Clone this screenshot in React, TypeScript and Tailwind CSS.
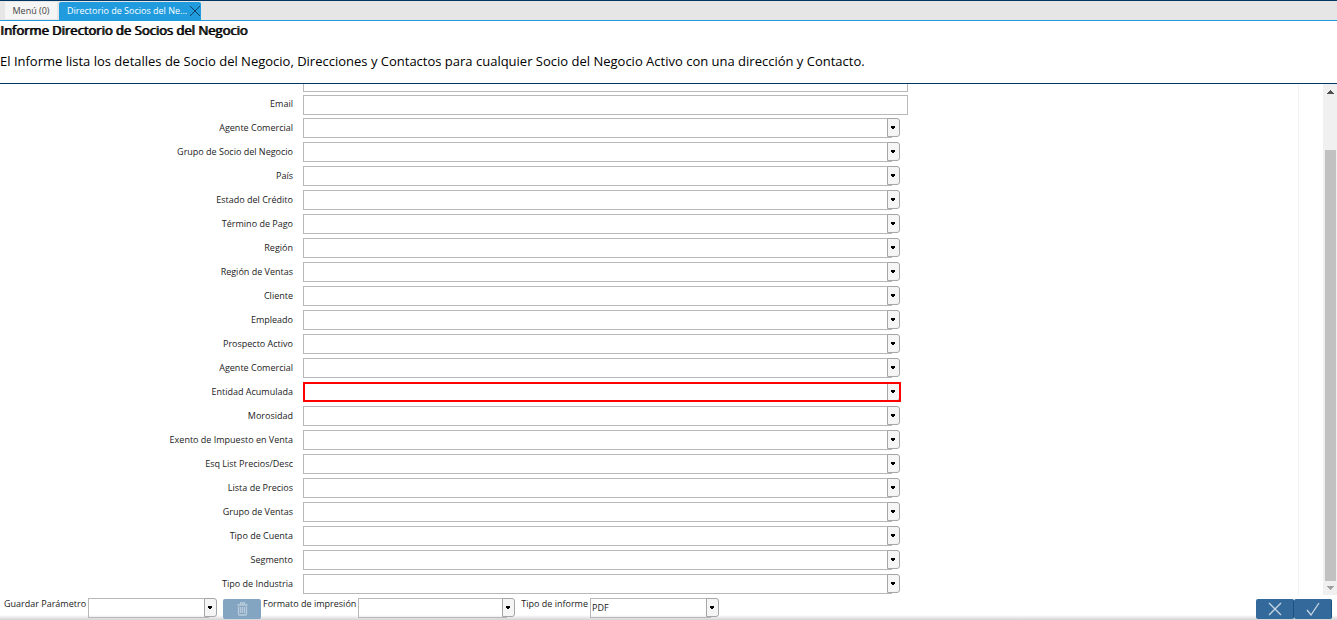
const fields = [
  'Agente Comercial',
  'Grupo de Socio del Negocio',
  'País',
  'Estado del Crédito',
  'Término de Pago',
  'Región',
  'Región de Ventas',
  'Cliente',
  'Empleado',
  'Prospecto Activo',
  'Agente Comercial',
  'Entidad Acumulada',
  'Morosidad',
  'Exento de Impuesto en Venta',
  'Esq List Precios/Desc',
  'Lista de Precios',
  'Grupo de Ventas',
  'Tipo de Cuenta',
  'Segmento',
  'Tipo de Industria',
]

const Combo = ({
  id,
  options = [''],
  required = false,
}: {
  id: string
  options?: string[]
  required?: boolean
}) => (
  <div className="relative h-5">
    <select
      id={id}
      className="block h-5 w-full appearance-none rounded-none bg-transparent pr-4 pl-0.5 text-[9px] text-[#222] outline-none"
    >
      {options.map((option) => (
        <option key={option}>{option}</option>
      ))}
    </select>
    <span className="pointer-events-none absolute inset-y-0 right-2 left-0 border border-r-0 border-[#b8b8b8]" />
    <span className="pointer-events-none absolute top-0 right-0 flex h-[19px] w-[13px] items-center justify-center rounded-r-[3px] border border-[#a6a6a6] bg-[#f5f5f5] pr-px">
      <svg width="4" height="3" viewBox="0 0 4 3" shapeRendering="crispEdges">
        <path d="M0 0h4v2H3v1H1V2H0z" fill="#000" />
      </svg>
    </span>
    {required && (
      <span className="pointer-events-none absolute inset-y-0 -right-px left-0 border-2 border-[#ff0000]" />
    )}
  </div>
)

const TextRow = ({ label, hideLabel = false }: { label: string; hideLabel?: boolean }) => (
  <div className="grid h-[23px] grid-cols-[293fr_605fr_380fr] gap-x-2.5 pt-0.5">
    {hideLabel ? (
      <span />
    ) : (
      <label htmlFor={label} className="text-right leading-[18px]">
        {label}
      </label>
    )}
    <input
      id={label}
      aria-label={hideLabel ? label : undefined}
      type="text"
      className="h-5 w-full border border-[#b8b8b8] bg-white px-1 outline-none"
    />
  </div>
)

const Tabs = () => (
  <nav className="flex h-[21px] shrink-0 items-end border-t border-b border-t-[#003764] border-b-[#1f9bde] bg-[#e6e6e6] pl-[5px]">
    <button className="mb-px h-[17px] w-[52px] bg-[#f5f5f5] text-[9px] text-[#444]">Menú (0)</button>
    <div className="ml-0.5 flex h-[18px] w-[142px] items-center justify-between rounded-t-[2px] bg-[#1f9bde] pl-2">
      <button className="text-[9px] font-medium whitespace-nowrap text-white">
        Directorio de Socios del Ne...
      </button>
      <button aria-label="Cerrar">
        <svg width="12" height="12" viewBox="0 0 12 12" stroke="#123f5e" fill="none">
          <path d="M1 1l10 10M11 1L1 11" />
        </svg>
      </button>
    </div>
  </nav>
)

const Scrollbar = () => (
  <div className="flex w-3.5 shrink-0 flex-col items-center bg-[#f0f0f0]">
    <svg width="7" height="4" viewBox="0 0 7 4" className="mt-1.5" shapeRendering="crispEdges">
      <path d="M3 0h1v1h1v1h1v1h1v1H0V3h1V2h1V1h1z" fill="#505050" />
    </svg>
    <div className="grow-[56]" />
    <div className="w-[11px] grow-[431] bg-[#c1c1c1]" />
    <svg width="7" height="4" viewBox="0 0 7 4" className="mt-[5px] mb-[5px]" shapeRendering="crispEdges">
      <path d="M0 0h7v1H6v1H5v1H4v1H3V3H2V2H1V1H0z" fill="#a0a0a0" />
    </svg>
  </div>
)

const Footer = () => (
  <footer className="flex h-[25px] shrink-0 items-start bg-linear-to-b from-white from-80% to-[#d4d4d4] text-[9px]">
    <label htmlFor="guardar" className="ml-1 leading-[18px]">
      Guardar Parámetro
    </label>
    <div className="mt-[3px] ml-0.5 w-[129px]">
      <Combo id="guardar" />
    </div>
    <button
      aria-label="Eliminar"
      className="mt-1 ml-1.5 flex h-5 w-[38px] items-center justify-center rounded-[2px] bg-[#84a5c1]"
    >
      <svg width="11" height="14" viewBox="0 0 11 14" stroke="#b9cbdb" strokeWidth="1.3" fill="none">
        <path d="M0.5 3h10M3.500 2.500V1h4v1.500M1.500 4.500v7.500q0 1 1 1h6q1 0 1-1V4.500M3.500 5v6M5.500 5v6M7.500 5v6" />
      </svg>
    </button>
    <label htmlFor="formato" className="ml-0.5 leading-[18px]">
      Formato de impresión
    </label>
    <div className="mt-[3px] ml-0.5 w-[157px]">
      <Combo id="formato" />
    </div>
    <label htmlFor="tipo" className="ml-1.5 leading-[18px]">
      Tipo de informe
    </label>
    <div className="mt-[3px] ml-0.5 w-[129px]">
      <Combo id="tipo" options={['PDF', 'HTML', 'XLS']} />
    </div>
    <div className="mt-1 mr-[5px] ml-auto flex h-5">
      <button
        aria-label="Cancelar"
        className="flex w-[38px] items-center justify-center rounded-[2px] border-r border-[#1d527f] bg-[#336a9b]"
      >
        <svg width="14" height="14" viewBox="0 0 14 14" stroke="#c5d5e3" strokeWidth="1.3" fill="none">
          <path d="M1 1l12 12M13 1L1 13" />
        </svg>
      </button>
      <button
        aria-label="Aceptar"
        className="flex w-[38px] items-center justify-center rounded-[2px] border-r border-[#1d527f] bg-[#336a9b]"
      >
        <svg width="14" height="14" viewBox="0 0 14 14" stroke="#c5d5e3" strokeWidth="1.3" fill="none">
          <path d="M1 8l4 5L13 1" />
        </svg>
      </button>
    </div>
  </footer>
)

const App = () => {
  return (
    <div className="flex h-screen flex-col overflow-hidden bg-white font-['Open_Sans',sans-serif] text-[#222]">
      <Tabs />
      <header className="h-[63px] shrink-0 border-b border-[#003764] text-[13px] text-black">
        <h1 className="leading-[18px] [text-shadow:1px_0_0_#000]">Informe Directorio de Socios del Negocio</h1>
        <p className="mt-[13px] leading-[18px]">
          El Informe lista los detalles de Socio del Negocio, Direcciones y Contactos para cualquier Socio del
          Negocio Activo con una dirección y Contacto.
        </p>
      </header>
      <main className="flex min-h-0 flex-1">
        <div className="mr-6 min-w-0 flex-1 overflow-hidden border-r border-[#f3f3f3]">
          <form className="-mt-3.5 text-[9px]">
            <TextRow label="Nombre" hideLabel />
            <TextRow label="Email" />
            {fields.map((field, i) => (
              <div key={i} className="grid h-6 grid-cols-[293fr_605fr_380fr] gap-x-2.5 pt-0.5">
                <label htmlFor={`field-${i}`} className="text-right leading-5">
                  {field}
                </label>
                <div className="pr-2">
                  <Combo id={`field-${i}`} required={field === 'Entidad Acumulada'} />
                </div>
              </div>
            ))}
          </form>
        </div>
        <Scrollbar />
      </main>
      <Footer />
    </div>
  )
}

export default App
